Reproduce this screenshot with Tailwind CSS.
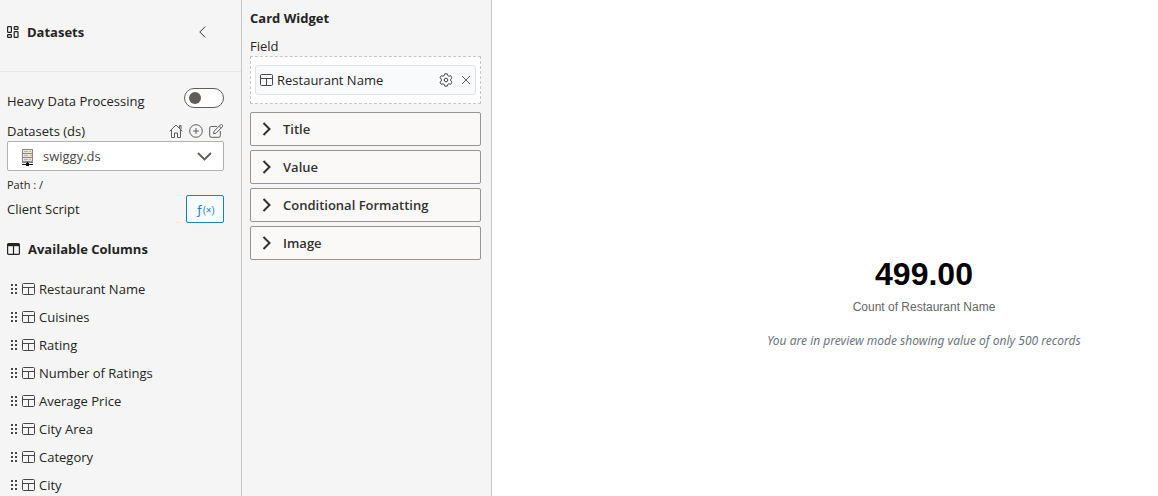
<!DOCTYPE html>
<html lang="en">
<head>
  <meta charset="UTF-8" />
  <meta name="viewport" content="width=device-width, initial-scale=1.0"/>
  <title>Card Widget</title>
  <script src="https://cdn.jsdelivr.net/npm/@tailwindcss/browser@4"></script>
</head>
<body class="bg-white text-[#252423] text-[13px] leading-5 font-['Open_Sans',sans-serif]">
  <!-- Shared icons -->
  <svg class="hidden">
    <symbol id="icon-table" viewBox="0 0 14 13">
      <g fill="none" stroke="currentColor"><rect x="0.5" y="0.5" width="12" height="11" rx="1"/><path d="M0.5 4.5h12M6.5 4.5v7"/></g>
    </symbol>
    <symbol id="icon-grip" viewBox="0 0 8 12">
      <path fill="currentColor" d="M1 1h2v2H1zM5 1h2v2H5zM1 5h2v2H1zM5 5h2v2H5zM1 9h2v2H1zM5 9h2v2H5z"/>
    </symbol>
    <symbol id="icon-right" viewBox="0 0 10 14">
      <path fill="none" stroke="currentColor" stroke-width="2" d="M1.5 1l6 6-6 6"/>
    </symbol>
  </svg>

  <div class="flex h-screen overflow-hidden">
    <!-- Datasets panel -->
    <aside class="w-[242px] shrink-0 overflow-hidden border-r border-[#c8c6c4] bg-[#f5f5f5]">
      <header class="flex items-center border-b border-[#e6e6e6] pt-5 pb-[27px] pl-[7px] pr-8">
        <svg class="h-3 w-3" viewBox="0 0 12 12" fill="none" stroke="#252423" stroke-width="1.2"><rect x="0.6" y="0.6" width="3.8" height="5.8" rx="0.6"/><rect x="7.2" y="0.6" width="3.8" height="2.8" rx="0.6"/><rect x="0.6" y="8.6" width="3.8" height="2.8" rx="0.6"/><rect x="7.2" y="5.6" width="3.8" height="5.8" rx="0.6"/></svg>
        <h2 class="ml-2 flex-1 font-bold leading-6">Datasets</h2>
        <button type="button" aria-label="Collapse" class="px-[3px]"><svg class="h-3 w-[7px]" viewBox="0 0 7 12" fill="none" stroke="#323130"><path d="M6.2 0.6L0.8 6l5.4 5.4"/></svg></button>
      </header>

      <div class="pl-[7px] pr-[17px]">
        <div class="flex items-start justify-between pt-4">
          <label for="heavy" class="leading-[26px]">Heavy Data Processing</label>
          <span class="relative block h-5 w-10">
            <input id="heavy" type="checkbox" role="switch" class="peer block h-5 w-10 appearance-none rounded-full border border-[#605e5c] bg-white">
            <span class="pointer-events-none absolute top-1 left-[5px] h-3 w-3 rounded-full bg-[#605e5c] peer-checked:left-[23px]"></span>
          </span>
        </div>

        <div class="mt-[7px] flex items-center justify-between">
          <label for="dataset">Datasets (ds)</label>
          <div class="flex gap-[6px] pr-px text-[#605e5c]">
            <button type="button" aria-label="Home"><svg class="size-[14px]" viewBox="0 0 14 14" fill="none" stroke="currentColor"><path d="M0.6 7.3L7 1l6.4 6.3M2.500 6v7.500h3v-4.500h3v4.500h3V6M10.500 4V1.500h1.500v4"/></svg></button>
            <button type="button" aria-label="Add"><svg class="size-[14px]" viewBox="0 0 14 14" fill="none" stroke="currentColor"><circle cx="7" cy="7" r="6.3"/><path d="M7 4v6M4 7h6"/></svg></button>
            <button type="button" aria-label="Edit"><svg class="size-[14px]" viewBox="0 0 14 14" fill="none" stroke="currentColor"><path d="M8 2.5H2.2a1.5 1.5 0 0 0-1.500 1.500v7.800a1.500 1.500 0 0 0 1.500 1.500h7.600a1.500 1.500 0 0 0 1.500-1.500V7M4.500 9.800l.6-2.600 6.200-6.300a1.300 1.300 0 0 1 2 2L7 9.200zM10 2.200l2 2"/></svg></button>
          </div>
        </div>

        <div class="relative">
          <select id="dataset" class="block h-[30px] w-full appearance-none rounded-[2px] border border-[#b3b0ad] bg-white pl-[35px] text-[#484644]">
            <option>swiggy.ds</option>
          </select>
          <svg class="pointer-events-none absolute top-2 left-[14px] h-[17px] w-[13px]" viewBox="0 0 13 17"><path fill="#8a8886" d="M1 0h11v14H1z"/><path fill="#e8e4da" d="M2 1h9v3H2zM2 5h9v3H2zM2 9h9v3H2z"/><path fill="#b5b2ac" d="M3 2h4v1H3zM3 6h4v1H3zM3 10h4v1H3z"/><path fill="#e0b070" d="M8 2h2v1H8zM9 6h2v1H9zM8 10h2v1H8z"/><path fill="#111" d="M6 13h1v1H6zM1 15h11v1H1zM5 14h3v3H5z"/></svg>
          <svg class="pointer-events-none absolute top-[11px] right-3 h-[9px] w-[15px]" viewBox="0 0 15 9" fill="none" stroke="#605e5c" stroke-width="1.8"><path d="M1 1l6.5 6.5L14 1"/></svg>
        </div>

        <p class="mt-1 text-[11px] leading-5">Path : /</p>

        <div class="flex items-center justify-between">
          <span>Client Script</span>
          <button type="button" class="h-7 w-[38px] rounded-[2px] border border-[#1a7fc4] bg-[#f8fbfe] text-[#1a7fc4]"><span class="text-[13px]">ƒ</span><span class="text-[10px]">(×)</span></button>
        </div>

        <div class="mt-4 flex items-center">
          <svg class="h-3 w-[13px]" viewBox="0 0 13 12" fill="none" stroke="#252423" stroke-width="1.2"><rect x="0.6" y="0.6" width="11.8" height="10.8" rx="1"/><path d="M6.5 3v8.400"/><path d="M1 2h11" stroke-width="2.4"/></svg>
          <h3 class="ml-2 font-bold">Available Columns</h3>
        </div>

        <ul id="columns" class="mt-4 pl-[3px]"></ul>
      </div>
    </aside>

    <!-- Widget settings -->
    <section class="w-[250px] shrink-0 overflow-hidden border-r border-[#c8c6c4] bg-[#f5f5f5] pt-2 pl-2 pr-[10px]">
      <h2 class="font-bold">Card Widget</h2>
      <p class="mt-2">Field</p>
      <div class="border border-dashed border-[#c8c6c4] bg-white px-1 py-2">
        <div class="flex h-[30px] items-center rounded-[3px] border border-[#dde3e8] bg-[#f8fafc] px-1">
          <svg class="h-[13px] w-[14px] text-[#484644]"><use href="#icon-table"/></svg>
          <span class="ml-[3px] flex-1">Restaurant Name</span>
          <button type="button" aria-label="Settings"><svg class="size-[14px]" viewBox="0 0 14 14" fill="none" stroke="#484644" stroke-linejoin="round"><path d="M5.800 0.800h2.400l.5 1.700 1.200.7 1.800-.5 1.300 2.100-1.300 1.300v1.800l1.300 1.300-1.300 2.100-1.800-.5-1.200.7-.5 1.700H5.800l-.5-1.700-1.200-.7-1.800.5L1 9.200l1.300-1.300V6.100L1 4.800l1.300-2.100 1.800.5 1.200-.7z"/><circle cx="7" cy="7" r="1.800"/></svg></button>
          <button type="button" aria-label="Remove" class="ml-2"><svg class="size-[10px]" viewBox="0 0 10 10" fill="none" stroke="#605e5c"><path d="M1 1l8 8M9 1L1 9"/></svg></button>
        </div>
      </div>
      <div id="sections" class="mt-2 space-y-1"></div>
    </section>

    <!-- Preview -->
    <main class="min-w-0 flex-1 pt-[254px] pl-[198px] text-center">
      <div class="font-['Liberation_Sans',Arial,sans-serif]">
        <p class="text-[32px] font-bold leading-10 text-black">499.00</p>
        <p class="mt-[3px] text-xs leading-5 text-[#666666]">Count of Restaurant Name</p>
      </div>
      <p class="mt-[14px] font-['Noto_Sans',sans-serif] text-xs leading-5 italic text-[#6c757d]">You are in preview mode showing value of only 500 records</p>
    </main>
  </div>

  <script>
    const columns = ['Restaurant Name', 'Cuisines', 'Rating', 'Number of Ratings', 'Average Price', 'City Area', 'Category', 'City'];
    const sections = ['Title', 'Value', 'Conditional Formatting', 'Image'];

    document.getElementById('columns').innerHTML = columns.map(name => `
      <li class="flex h-7 items-center">
        <svg class="h-3 w-2 text-[#484644]"><use href="#icon-grip"/></svg>
        <svg class="ml-1 h-[13px] w-[14px] text-[#484644]"><use href="#icon-table"/></svg>
        <span class="ml-[3px]">${name}</span>
      </li>`).join('');

    document.getElementById('sections').innerHTML = sections.map(name => `
      <button type="button" class="flex h-[34px] w-full items-center rounded-[2px] border border-[#979593] bg-[#faf9f8] pl-[11px] font-semibold text-[#323130]">
        <svg class="h-[14px] w-[10px]"><use href="#icon-right"/></svg>
        <span class="ml-[11px]">${name}</span>
      </button>`).join('');
  </script>
</body>
</html>
